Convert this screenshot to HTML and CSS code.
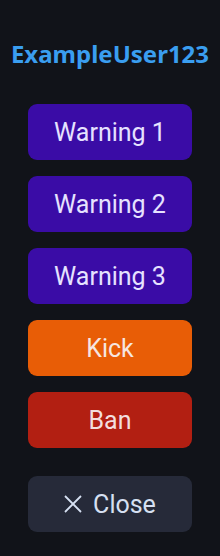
FILE: index.html
```html
<!DOCTYPE html>
<html>
<head>
  <title>User actions</title>
  <link rel="stylesheet" href="styles.css">
</head>
<body>
  <section class="panel">
    <h1 class="user-name">ExampleUser123</h1>
    <div class="action-list">
      <button class="btn-action btn-warn">Warning 1</button>
      <button class="btn-action btn-warn">Warning 2</button>
      <button class="btn-action btn-warn">Warning 3</button>
      <button class="btn-action btn-kick">Kick</button>
      <button class="btn-action btn-ban">Ban</button>
      <button class="btn-action btn-close">
        <svg class="close-x" width="18" height="18" viewBox="0 0 18 18">
          <path d="M1 1 L17 17 M17 1 L1 17" stroke="currentColor" stroke-width="1.8" fill="none"/>
        </svg>
        Close
      </button>
    </div>
  </section>
</body>
</html>
```

FILE: styles.css
```css
* {
  margin: 0;
  padding: 0;
  box-sizing: border-box;
}

body {
  background-color: #111319;
  font-family: Roboto, "Noto Sans", sans-serif;
}

.panel {
  display: flex;
  flex-direction: column;
  align-items: center;
  min-height: 100vh;
  padding-top: 38px;
}

.user-name {
  font-family: "Noto Sans", sans-serif;
  font-size: 24px;
  font-weight: 700;
  line-height: 32px;
  color: #3a9ef0;
  margin-bottom: 34px;
}

.action-list {
  display: flex;
  flex-direction: column;
  gap: 16px;
  width: 164px;
}

.btn-action {
  height: 56px;
  border: none;
  border-radius: 9px;
  font-family: Roboto, sans-serif;
  font-size: 25px;
  color: #e6e2ff;
  cursor: pointer;
}

.btn-warn {
  background-color: #3a0ca6;
}

.btn-kick {
  background-color: #e85d06;
  color: #f6e6e0;
}

.btn-ban {
  background-color: #b21f12;
  color: #f2dede;
}

.btn-close {
  display: flex;
  align-items: center;
  justify-content: center;
  gap: 11px;
  margin-top: 12px;
  background-color: #262a39;
  color: #d6e0f2;
}

.close-x {
  display: block;
  flex-shrink: 0;
}
```
